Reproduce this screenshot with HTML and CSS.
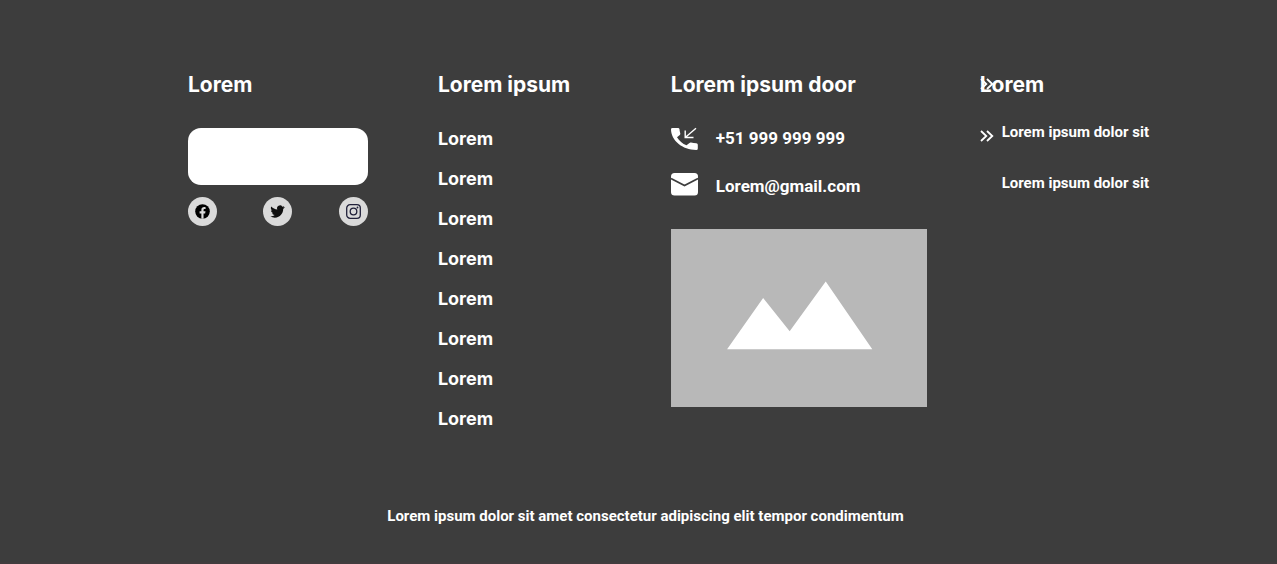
FILE: index.html
```html
<!DOCTYPE html>
<html lang="en">
<head>
<meta charset="utf-8">
<meta name="viewport" content="width=device-width, initial-scale=1">
<title>Lorem</title>
<link rel="stylesheet" href="styles.css">
</head>
<body>
<footer class="footer">
  <div class="columns">
    <section class="brand">
      <h2 class="title">Lorem</h2>
      <div class="logo"></div>
      <div class="social">
        <a class="social-link" href="#" aria-label="Facebook">
          <svg width="15" height="15" viewBox="0 0 16 16"><circle cx="8" cy="8" r="7.800" fill="#000"/><path d="M6.800 15.800V10H4.900V7.700H6.800V6.200c0-2 1.200-3 3-3 .6 0 1.200.1 1.500.2v1.900h-1c-.9 0-1.200.5-1.200 1.100v1.300h2.100l-.4 2.300H9.100v5.800z" fill="#dadada"/></svg>
        </a>
        <a class="social-link" href="#" aria-label="Twitter">
          <svg width="15" height="15" viewBox="1 1 22 22"><path fill="#111" d="M22.460 5.500c-.770.350-1.600.580-2.460.690.880-.530 1.560-1.370 1.880-2.380-.830.500-1.750.850-2.720 1.050A4.270 4.270 0 0 0 11.780 9.100C8.280 8.940 5.110 7.380 3 4.790a4.250 4.250 0 0 0 1.330 5.720c-.710 0-1.370-.200-1.950-.500v.030c0 2.080 1.480 3.820 3.440 4.210a4.200 4.200 0 0 1-1.940.070 4.280 4.280 0 0 0 4 2.980A8.520 8.520 0 0 1 1.500 19.030 12.100 12.100 0 0 0 8.120 21c7.880 0 12.210-6.540 12.210-12.210 0-.190 0-.370-.010-.560.840-.600 1.560-1.360 2.140-2.230z"/></svg>
        </a>
        <a class="social-link" href="#" aria-label="Instagram">
          <svg width="15" height="15" viewBox="0 0 15 15" fill="none" stroke="#20203a" stroke-width="1.300"><rect x=".700" y=".700" width="13.600" height="13.600" rx="3.400"/><circle cx="7.500" cy="7.500" r="3.300"/><circle cx="11.500" cy="3.500" r=".900" fill="#20203a" stroke="none"/></svg>
        </a>
      </div>
    </section>

    <nav class="menu" aria-labelledby="menu-title">
      <h2 class="title" id="menu-title">Lorem ipsum</h2>
      <ul class="menu-list">
        <li><a href="#">Lorem</a></li>
        <li><a href="#">Lorem</a></li>
        <li><a href="#">Lorem</a></li>
        <li><a href="#">Lorem</a></li>
        <li><a href="#">Lorem</a></li>
        <li><a href="#">Lorem</a></li>
        <li><a href="#">Lorem</a></li>
        <li><a href="#">Lorem</a></li>
      </ul>
    </nav>

    <section class="contact">
      <h2 class="title">Lorem ipsum door</h2>
      <a class="contact-row" href="tel:+51999999999">
        <svg width="27" height="24" viewBox="0 0 27 24"><path fill="#fff" d="M1.500 2H7Q8.300 2 8.500 3.300Q8.600 5.700 9.300 7.400Q9.500 8.300 8.800 9L6 11.300C8.200 15 11.500 17.800 15.500 19.300L18.500 16.900Q19.200 16.400 20 16.600Q22.500 17.200 25.300 17.300Q26.800 17.500 26.800 18.700V22.500Q26.800 24 25.300 24C11.500 24 0 14.500 0 3.300Q0 2 1.500 2Z"/><path fill="none" stroke="#fff" stroke-width="1.400" d="M25 2.300L14.500 11.300M14.200 4.500V11.500H22.500"/></svg>
        <span>+51 999 999 999</span>
      </a>
      <a class="contact-row" href="mailto:Lorem@gmail.com">
        <svg width="27" height="26" viewBox="0 0 27 26"><rect width="27" height="22.500" rx="3.500" fill="#fff"/><path d="M0 5.500L13.500 12.500L27 5.500" fill="none" stroke="#3d3d3d" stroke-width="1.700"/></svg>
        <span>Lorem@gmail.com</span>
      </a>
      <svg class="photo" viewBox="0 0 256 178" role="img" aria-label="Lorem ipsum"><rect width="256" height="178" fill="#b8b8b8"/><path d="M56 120L92 69L118.500 102L154.500 52.500L201 120Z" fill="#fff"/></svg>
    </section>

    <section class="more">
      <div class="more-head">
        <h2 class="title">Lorem</h2>
        <svg class="chevrons overlay" width="14" height="12" viewBox="0 0 14 12"><path d="M1 1L6.300 6L1 11M7 1L12.300 6L7 11"/></svg>
      </div>
      <a class="more-row" href="#">
        <svg class="chevrons" width="14" height="12" viewBox="0 0 14 12"><path d="M1 1L6.300 6L1 11M7 1L12.300 6L7 11"/></svg>
        <span>Lorem ipsum dolor sit</span>
      </a>
      <a class="more-row" href="#"><span>Lorem ipsum dolor sit</span></a>
    </section>
  </div>
  <p class="legal">Lorem ipsum dolor sit amet consectetur adipiscing elit tempor condimentum</p>
</footer>
</body>
</html>
```
FILE: styles.css
```css
* {
  box-sizing: border-box;
}

body {
  margin: 0;
  background: #3d3d3d;
  color: #fff;
  font-family: Inter, "Liberation Sans", sans-serif;
}

a {
  color: inherit;
  text-decoration: none;
}

svg {
  display: block;
  flex: none;
}

.footer {
  min-height: 100vh;
  padding: 70px 128px 32px 188px;
  border-bottom: 2px solid #413c3e;
}

.columns {
  display: grid;
  grid-template-columns: 250fr 233fr 309fr 168fr;
  align-items: start;
}

.title {
  margin: 0 0 28px;
  font-size: 21px;
  line-height: 30px;
  font-weight: 700;
  white-space: nowrap;
}

.brand {
  width: 72%;
}

.logo {
  height: 57px;
  margin-bottom: 12px;
  border-radius: 13px;
  background: #fff;
}

.social {
  display: flex;
  justify-content: space-between;
}

.social-link {
  display: grid;
  place-items: center;
  width: 29px;
  height: 29px;
  border-radius: 50%;
  background: #dadada;
}

.menu-list {
  display: grid;
  gap: 14px;
  margin: 0;
  padding: 0;
  list-style: none;
  font-size: 18px;
  line-height: 26px;
  font-weight: 700;
}

.menu .title,
.contact .title {
  margin-bottom: 26px;
}

.contact-row {
  display: flex;
  align-items: center;
  gap: 18px;
  height: 24px;
  margin-bottom: 24px;
  font: 700 17px/24px Roboto, sans-serif;
}

.photo {
  width: 83%;
  margin-top: 31px;
}

.more-head {
  position: relative;
}

.more .title {
  margin-bottom: 22px;
}

.chevrons {
  fill: none;
  stroke: #fff;
  stroke-width: 1.8;
}

.overlay {
  position: absolute;
  left: 0;
  top: 8px;
}

.more-row {
  display: grid;
  grid-template-columns: 14px 1fr;
  column-gap: 8px;
  margin-bottom: 31px;
  font: 700 15px/20px Roboto, sans-serif;
  white-space: nowrap;
}

.more-row .chevrons {
  align-self: end;
}

.more-row span {
  grid-column: 2;
}

.legal {
  margin: 74px 0 0;
  padding-right: 46px;
  font: 700 15px/20px Roboto, sans-serif;
  text-align: center;
}
```
